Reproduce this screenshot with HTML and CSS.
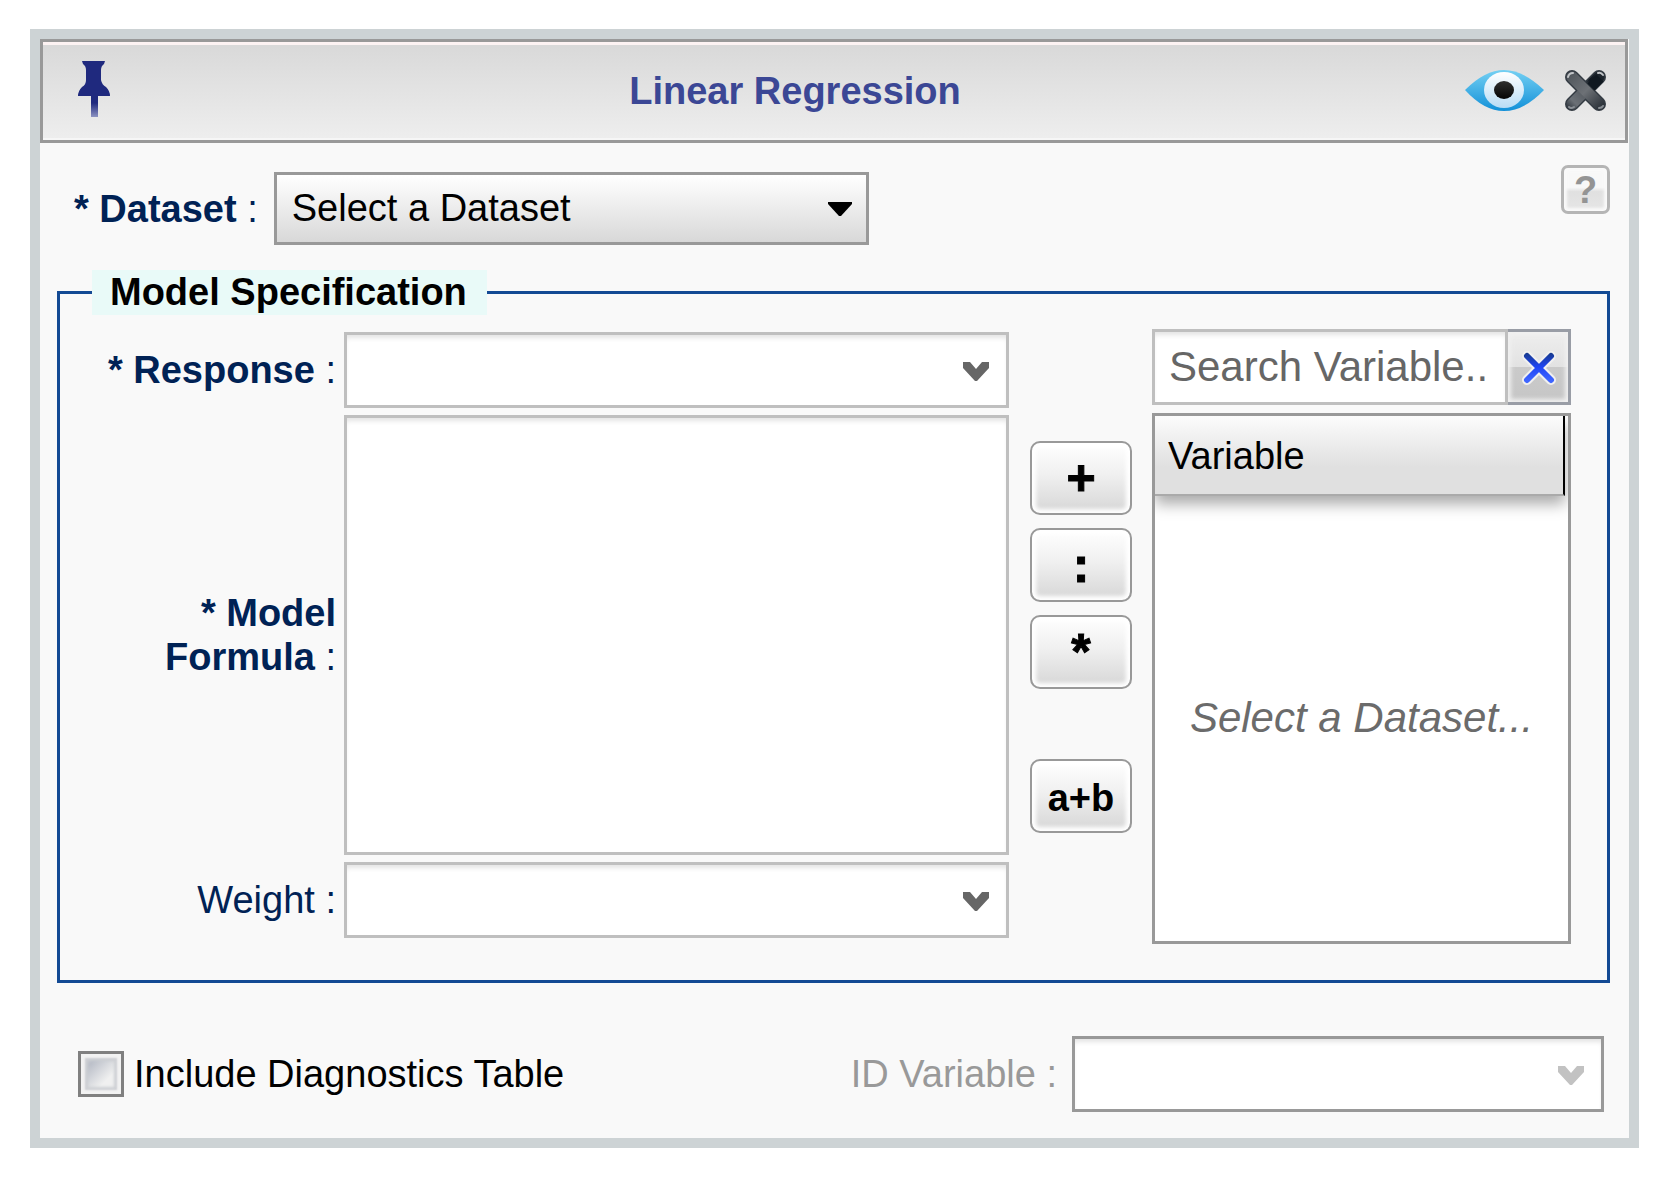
FILE: index.html
```html
<!DOCTYPE html>
<html lang="en">
<head>
<meta charset="UTF-8" />
<meta name="viewport" content="width=device-width, initial-scale=1" />
<title>Linear Regression</title>
<link rel="stylesheet" href="styles.css">
</head>
<body>

<div class="dialog">
  <header class="dialog-header">
    <button type="button" class="icon-button" aria-label="Pin">
      <svg width="34" height="64" viewBox="0 0 34 64">
        <defs>
          <linearGradient id="pin-fill" x1="0" y1="0" x2="0" y2="1">
            <stop offset="0.75" stop-color="#1f297e" />
            <stop offset="1" stop-color="#8d93c2" />
          </linearGradient>
        </defs>
        <path fill="url(#pin-fill)" d="M5 2H28L27 5Q24 7 24 11V21Q25 26 29 28Q33 32 33 37H21V58H14V37H1Q1 32 5 28Q9 26 9 21V11Q9 7 6 5Z" />
      </svg>
    </button>
    <h1>Linear Regression</h1>
    <div class="header-tools">
      <button type="button" class="icon-button" aria-label="Preview">
        <svg width="80" height="42" viewBox="0 0 80 42">
          <defs>
            <linearGradient id="eye-fill" x1="0" y1="0" x2="0" y2="1">
              <stop offset="0" stop-color="#74d0f3" />
              <stop offset="1" stop-color="#1290d8" />
            </linearGradient>
            <linearGradient id="iris-fill" x1="0" y1="0" x2="0" y2="1">
              <stop offset="0" stop-color="#ffffff" />
              <stop offset="1" stop-color="#b8dcf5" />
            </linearGradient>
            <linearGradient id="pupil-fill" x1="0" y1="0" x2="0" y2="1">
              <stop offset="0" stop-color="#303030" />
              <stop offset="1" stop-color="#050505" />
            </linearGradient>
          </defs>
          <path fill="url(#eye-fill)" d="M0 20Q20 0 39 0T79 20Q59 41 39 41T0 20Z" />
          <ellipse cx="39" cy="20" rx="20" ry="18" fill="url(#iris-fill)" />
          <ellipse cx="39" cy="20" rx="10" ry="9" fill="url(#pupil-fill)" />
        </svg>
      </button>
      <button type="button" class="icon-button" aria-label="Close">
        <svg width="42" height="42" viewBox="0 0 42 42">
          <defs>
            <linearGradient id="close-fill" gradientUnits="userSpaceOnUse" x1="2" y1="2" x2="40" y2="40">
              <stop offset="0" stop-color="#4d5359" />
              <stop offset="0.5" stop-color="#6d7176" />
              <stop offset="1" stop-color="#1f262e" />
            </linearGradient>
            <linearGradient id="close-fill-back" gradientUnits="userSpaceOnUse" x1="40" y1="2" x2="2" y2="40">
              <stop offset="0" stop-color="#252c34" />
              <stop offset="0.3" stop-color="#0f171f" />
              <stop offset="0.5" stop-color="#54595f" />
              <stop offset="0.8" stop-color="#6b7076" />
              <stop offset="1" stop-color="#252c34" />
            </linearGradient>
          </defs>
          <g fill="none" stroke-linecap="round">
            <path stroke="#343b43" stroke-width="14" d="M7 7L34 34M34 7L7 34" />
            <path stroke="url(#close-fill-back)" stroke-width="11" d="M34 7L7 34" />
            <path stroke="url(#close-fill)" stroke-width="11" d="M7 7L34 34" />
            <path stroke="#101820" stroke-width="10" stroke-linecap="butt" d="M35 8L26 17" />
            <path stroke="#c3c6c9" stroke-width="2" d="M3 7Q4 3 8 3M33 3Q36 2 38 5" />
            <path stroke="#8b9096" stroke-width="2" d="M4 37Q6 39 9 37M34 38Q37 38 38 36" />
          </g>
        </svg>
      </button>
    </div>
  </header>

  <form class="dialog-body">
    <div class="dataset-row">
      <div class="dataset-field">
        <label for="dataset"><b>* Dataset</b> :</label>
        <select id="dataset" class="dataset-select">
          <option>Select a Dataset</option>
        </select>
      </div>
      <button type="button" class="help-button">?</button>
    </div>

    <fieldset class="model">
      <legend>Model Specification</legend>
      <div class="model-content">
        <div class="model-fields">
          <label for="response"><b>* Response</b> :</label>
          <select id="response" class="combo"><option></option></select>

          <label for="formula"><b>* Model</b> <b>Formula</b> :</label>
          <textarea id="formula" class="formula"></textarea>

          <label for="weight">Weight :</label>
          <select id="weight" class="combo"><option></option></select>
        </div>

        <div class="operators">
          <button type="button" class="operator symbol">+</button>
          <button type="button" class="operator symbol">:</button>
          <button type="button" class="operator symbol">*</button>
          <button type="button" class="operator sum">a+b</button>
        </div>

        <div class="variables">
          <div class="search">
            <input type="text" class="search-input" placeholder="Search Variable.." aria-label="Search Variable" />
            <button type="button" class="clear-button" aria-label="Clear search">
              <svg width="36" height="36" viewBox="0 0 36 36">
                <defs>
                  <linearGradient id="clear-fill" gradientUnits="userSpaceOnUse" x1="0" y1="4" x2="0" y2="32">
                    <stop offset="0" stop-color="#173a8c" />
                    <stop offset="0.5" stop-color="#1f45f5" />
                    <stop offset="1" stop-color="#3f66ff" />
                  </linearGradient>
                </defs>
                <g fill="none" stroke-linecap="round">
                  <path stroke="#f0f0f0" stroke-width="10" d="M7 7L31 31M31 7L7 31" />
                  <path stroke="url(#clear-fill)" stroke-width="6" d="M7 7L31 31M31 7L7 31" />
                </g>
              </svg>
            </button>
          </div>
          <table class="variable-table">
            <thead>
              <tr><th>Variable</th></tr>
            </thead>
            <tbody>
              <tr><td>Select a Dataset...</td></tr>
            </tbody>
          </table>
        </div>
      </div>
    </fieldset>

    <div class="diagnostics-row">
      <label class="check-label"><input type="checkbox" class="check" />Include Diagnostics Table</label>
      <div class="id-field">
        <label for="id-variable">ID Variable :</label>
        <select id="id-variable" class="combo" disabled><option></option></select>
      </div>
    </div>
  </form>
</div>

</body>
</html>
```
FILE: styles.css
```css
* {
  box-sizing: border-box;
}
body {
  margin: 0;
  padding: 29px 23px 33px 30px;
  background-color: #fff;
  font-family: "Liberation Sans", Arial, sans-serif;
  font-size: 38px;
  line-height: 44px;
  color: #000;
}
button,
input,
select,
textarea {
  font: inherit;
  color: inherit;
  margin: 0;
  border-radius: 0;
}
.dialog {
  border: 10px solid #cdd3d5;
  background-color: #f9f9f9;
}

/* title bar */
.dialog-header {
  display: flex;
  align-items: center;
  height: 104px;
  margin-right: 1px;
  padding: 0 18px 0 34px;
  border: 3px solid #999;
  background: linear-gradient(#d8d8d8, #eee);
  box-shadow: inset 0 3px #fdf3f3, inset 0 -2px #f6f6f6;
}
.dialog-header h1 {
  flex: 1;
  margin: 0;
  padding-left: 14px;
  font-size: 38px;
  text-align: center;
  color: #3b4795;
}
.header-tools {
  display: flex;
  align-items: center;
  gap: 20px;
}
.icon-button {
  display: flex;
  padding: 0;
  border: none;
  background: none;
  cursor: pointer;
}

.dialog-body {
  padding: 22px 19px 26px 17px;
}
.dialog-body label {
  color: #002255;
}

/* dataset */
.dataset-row {
  display: flex;
  justify-content: space-between;
  align-items: flex-start;
}
.dataset-field {
  display: flex;
  align-items: center;
  gap: 16px;
  padding: 7px 0 0 17px;
}
.dataset-select {
  appearance: none;
  width: 595px;
  height: 73px;
  padding: 0 60px 2px 15px;
  border: 3px solid #999;
  background: url("data:image/svg+xml,%3Csvg xmlns='http://www.w3.org/2000/svg' width='24' height='14'%3E%3Cpath d='M0 0H24V2L13 14H11L0 2Z'/%3E%3C/svg%3E") no-repeat right 14px center, linear-gradient(#fff, #ececec 50%, #d8d8d8);
}
.help-button {
  width: 49px;
  height: 49px;
  padding: 0;
  border: 3px solid #b5b5b5;
  border-radius: 7px;
  background: linear-gradient(#f8f8f8 45%, #e0e0e0 55%, #e6e6e6);
  box-shadow: inset 0 0 3px 3px #fafafa;
  color: #949494;
  font-weight: bold;
  line-height: 40px;
}

/* model specification */
.model {
  min-width: 0;
  margin: 25px 0 0;
  padding: 14px 36px 36px 0;
  border: 3px solid #134a94;
}
.model legend {
  margin-left: 32px;
  padding: 0 20px 0 18px;
  background-color: #e9faf8;
  font-weight: bold;
  line-height: 45px;
}
.model-content {
  display: flex;
}
.model-fields {
  flex: 1;
  display: grid;
  grid-template-columns: 284px 1fr;
  grid-template-rows: 76px 440px 76px;
  align-items: center;
  gap: 7px 0;
  padding-top: 3px;
}
.model-fields label {
  padding-right: 8px;
  text-align: right;
}
.combo {
  appearance: none;
  width: 100%;
  height: 76px;
  padding: 0 60px 0 15px;
  border: 3px solid #bfbfbf;
  background: #fff url("data:image/svg+xml,%3Csvg xmlns='http://www.w3.org/2000/svg' width='26' height='22'%3E%3Cpath d='M0 3H7L13 10L19 3H26V9L14 22H12L0 9Z' fill='%23666'/%3E%3C/svg%3E") no-repeat right 17px center;
  box-shadow: inset 0 5px 5px -2px #e4e4e4;
}
.formula {
  display: block;
  width: 100%;
  height: 100%;
  padding: 10px 15px;
  border: 3px solid #bfbfbf;
  background-color: #fff;
  box-shadow: inset 0 5px 5px -2px #e4e4e4;
  resize: none;
}

.operators {
  display: flex;
  flex-direction: column;
  gap: 13px;
  padding: 112px 20px 0 21px;
}
.operator {
  width: 102px;
  height: 74px;
  padding: 0;
  border: 2px solid #999;
  border-radius: 10px;
  background: linear-gradient(#fff, #f0f0f0 45%, #d6d6d6);
  box-shadow: inset 0 0 4px 4px #fff;
  font-weight: bold;
}
.symbol {
  font-size: 50px;
  -webkit-text-stroke: 1px #000;
}
.sum {
  margin-top: 57px;
  padding-top: 4px;
}

/* variable picker */
.variables {
  display: flex;
  flex-direction: column;
  gap: 8px;
  width: 419px;
}
.search {
  display: flex;
  height: 76px;
}
.search-input {
  flex: 1;
  min-width: 0;
  padding: 0 0 0 14px;
  border: 3px solid #bfbfbf;
  background-color: #fff;
  box-shadow: inset 0 5px 5px -2px #e4e4e4;
  font-size: 42px;
}
.search-input::placeholder {
  color: #666;
}
.clear-button {
  display: flex;
  align-items: center;
  justify-content: center;
  width: 63px;
  padding: 0;
  border: 3px solid #999da6;
  border-left: none;
  background: linear-gradient(#eee, #e2e2e2 50%, #cacaca 50%, #c6c6c6);
  box-shadow: inset 0 0 4px 3px #f0f0f0;
}
.variable-table {
  width: 100%;
  height: 531px;
  padding-right: 3px;
  border: 3px solid #999;
  border-spacing: 0;
  background-color: #fff;
}
.variable-table th {
  height: 80px;
  padding: 2px 13px 0;
  border-right: 2px solid #000;
  border-bottom: 2px solid #aaa;
  background: linear-gradient(#fcfcfc, #e0e0e0 65%);
  box-shadow: 0 8px 14px #aaa;
  clip-path: inset(0 -3px -30px 0);
  font-weight: normal;
  text-align: left;
}
.variable-table td {
  padding: 0 0 2px 3px;
  color: #6b6b6b;
  font-size: 42px;
  font-style: italic;
  text-align: center;
}

/* diagnostics */
.diagnostics-row {
  display: flex;
  justify-content: space-between;
  align-items: center;
  padding: 53px 6px 0 21px;
}
.dialog-body .check-label {
  display: flex;
  align-items: center;
  gap: 10px;
  color: #000;
}
.check {
  appearance: none;
  width: 46px;
  height: 46px;
  border: 3px solid #808080;
  background: linear-gradient(135deg, #bcc0ca 25%, #f0f0f0 65%);
  box-shadow: inset 0 0 2px 4px #f2f2f2, inset 0 0 3px 7px #cdcfd3;
}
.id-field {
  display: flex;
  align-items: center;
  gap: 15px;
}
.dialog-body .id-field label {
  color: #999;
}
.id-field .combo {
  width: 532px;
  border-color: #999;
  background-image: url("data:image/svg+xml,%3Csvg xmlns='http://www.w3.org/2000/svg' width='26' height='22'%3E%3Cpath d='M0 3H7L13 10L19 3H26V9L14 22H12L0 9Z' fill='%23c2c2c2'/%3E%3C/svg%3E");
  opacity: 1;
}
```
